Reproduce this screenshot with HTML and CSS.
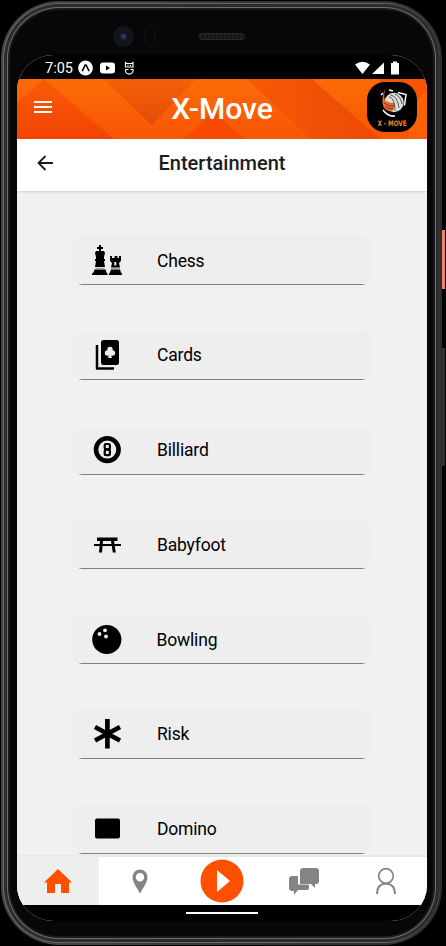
FILE: index.html
```html
<!DOCTYPE html>
<html lang="en">
<head>
<meta charset="utf-8">
<title>X-Move</title>
<link rel="stylesheet" href="styles.css">
</head>
<body>
<div class="phone">
  <i class="power"></i><i class="volume"></i>
  <div class="bezel">
    <div class="sensors"><i class="camera"></i><i class="sensor"></i><i class="speaker"></i></div>
    <div class="screen">
      <div class="status">
        <span class="time">7:05</span>
        <svg class="st-left" width="70" height="20" viewBox="0 0 70 20">
          <circle cx="7.5" cy="10" r="7.4" fill="#fff"/><path d="M4.3 13.2 7.2 7h.9l3 6.2" fill="none" stroke="#000" stroke-width="1.6"/>
          <rect x="22" y="4.6" width="15" height="11" rx="3" fill="#fff"/><path d="M28 7.6v5l4-2.500z"/>
          <path d="M47.500 9V4.500l1.500 1h4.500l1.500-1V9zM49.500 7.300h1M52 7.300h1M47.500 11.500h3M47.500 11.500v1.300a3.750 3.300 0 0 0 7.500 0v-1.300h-2.500" fill="none" stroke="#fff" stroke-width="1.200"/>
        </svg>
        <svg class="st-right" width="46" height="20" viewBox="0 0 46 20">
          <path d="M0 6.500q7.500-5.500 15 0L7.500 16zM17 16 29 4.500V16zM36 5h2V3.500h4V5h2v11.500h-8z" fill="#fff"/>
        </svg>
      </div>
      <header class="brand">
        <svg class="pattern" width="410" height="60" viewBox="0 0 410 60">
          <defs>
            <linearGradient id="base" x1="0" y1="0" x2="0" y2="1"><stop offset="0" stop-color="#f75c06"/><stop offset="1" stop-color="#f44302"/></linearGradient>
            <linearGradient id="lite" gradientUnits="userSpaceOnUse" x1="0" y1="0" x2="0" y2="60"><stop offset="0" stop-color="#fb6b08"/><stop offset="1" stop-color="#f95504"/></linearGradient>
            <linearGradient id="dark" x1="0" y1="0" x2="0" y2="1"><stop offset="0" stop-color="#f26007"/><stop offset="1" stop-color="#e64b08"/></linearGradient>
            <linearGradient id="shade" x1="0" y1="0" x2="1" y2="0"><stop offset="0" stop-color="#f55a05"/><stop offset="1" stop-color="#e94a06"/></linearGradient>
          </defs>
          <path d="M0 0h410v60H0z" fill="url(#base)"/>
          <path d="M0 0h27L0 24z" fill="url(#lite)"/>
          <path d="M27 0h60l62 60H97z" fill="url(#lite)"/>
          <path d="M87 0h92l-44 46z" fill="url(#dark)"/>
          <path d="M179 0h51l65 60H122l13-14z" fill="url(#lite)"/>
          <path d="M167 60 197 32 227 60z" fill="#f64a03"/>
          <path d="M230 0h65l68 60h-68z" fill="url(#shade)"/>
          <path d="M295 0h67l40 60h-39z" fill="url(#lite)"/>
          <path d="M362 0h48v60h-18z" fill="#f65403"/>
          <path d="M392 28 410 11v49h-18z" fill="#fb6105"/>
        </svg>
        <svg class="menu" width="18" height="12" viewBox="0 0 18 12"><path d="M0 1h18M0 6h18M0 11h18" stroke="#fff" stroke-width="2"/></svg>
        <h1>X-Move</h1>
        <svg class="logo" width="50" height="50" viewBox="0 0 50 50">
          <rect width="50" height="50" rx="18"/>
          <path d="m14 13 2-2M22 8l4 1M31 10.500l8 2-1.500 11M16 28q5 7 12 6" fill="none" stroke="#fff" stroke-width="1.500"/>
          <circle cx="27" cy="20.500" r="9.700" fill="#dedede"/>
          <path d="M18.500 6q-2 6-1 12 4 3 10 3 1 4-2 8-6 1-9-4-3-8 2-19z" fill="#f26a27"/>
          <path d="M22 14.500q6 2 6 14M23.500 13q7 1 8.500 13M28 12q6 3 7 10M17 21q5 4 10 3M18 24.500q4 3 8 2" fill="none" stroke="#333" stroke-width=".8"/>
          <text x="10.500" y="43.500" textLength="29" lengthAdjust="spacingAndGlyphs">X - MOVE</text>
        </svg>
      </header>
      <div class="titlebar">
        <svg class="back" width="16" height="16" viewBox="0 0 16 16"><path d="M16 8H1.500M8.500 1l-7 7 7 7" fill="none" stroke="#1c1c1e" stroke-width="1.800"/></svg>
        <h2>Entertainment</h2>
      </div>
      <main class="list">
        <div class="item"><svg viewBox="0 0 32 32"><path d="M8 0h2v2h2v2h-2v2h3l1 2-1 4v2h1v2h-1l1 6H4l1-6H4v-2h1v-2L4 8l1-2h3V4H6V2h2zM3.500 24.500h11l1 3 1 1v1.500H1v-1.500l1.500-1zM19 11h2v2h2.500v-2h3v2H28v-2h2v5l-2 2 1 4.500h-9l1-4.500-2-2zm4.300 6v3.500h2V17zM20 24.500h9l1 3 1 1v1.500H18v-1.500l1-1z"/><path d="M4.500 23.300h9M20 23.300h9" stroke="#777" stroke-width=".8"/></svg><span>Chess</span></div>
        <div class="item"><svg viewBox="0 0 32 32"><rect x="10" y="1" width="18" height="25" rx="2.500"/><path d="M6 6v23.500h17" fill="none" stroke="#000" stroke-width="2.500" stroke-linejoin="round"/><g fill="#eee"><circle cx="19" cy="10.500" r="2.700"/><circle cx="16.500" cy="14" r="2.700"/><circle cx="21.500" cy="14" r="2.700"/><path d="M18.200 12h1.600l1 7h-3.600z"/></g></svg><span>Cards</span></div>
        <div class="item"><svg viewBox="0 0 32 32"><circle cx="16.300" cy="15.600" r="11.300" fill="none" stroke="#000" stroke-width="4.600"/><rect x="13.700" y="10" width="5.200" height="5.200" rx="1.300" fill="none" stroke="#000" stroke-width="2.200"/><rect x="13.700" y="15.700" width="5.200" height="5.500" rx="1.300" fill="none" stroke="#000" stroke-width="2.200"/></svg><span>Billiard</span></div>
        <div class="item"><svg viewBox="0 0 32 32"><path d="M6 8.500h20.500V12H6zM3 15h27v2H3zM9 12h3l-1 11.500H8zM20 12h3l1.800 11.500h-3z"/></svg><span>Babyfoot</span></div>
        <div class="item"><svg viewBox="0 0 32 32"><circle cx="15.800" cy="15.500" r="14.600"/><g fill="#eee"><circle cx="8.500" cy="10" r="1.900"/><circle cx="14" cy="6.300" r="1.900"/><circle cx="15" cy="12.500" r="1.900"/></g></svg><span class="nudged">Bowling</span></div>
        <div class="item"><svg viewBox="0 0 32 32"><path d="M16.400 1v29.500M4 9l25 13.500M29 9 4 22.500" stroke="#000" stroke-width="4.700"/></svg><span>Risk</span></div>
        <div class="item"><svg viewBox="0 0 32 32"><rect x="4" y="5.500" width="25" height="20" rx="2"/></svg><span>Domino</span></div>
      </main>
      <nav class="tabs">
        <a class="active"><svg width="28" height="26" viewBox="0 0 28 26"><path d="M14 1 0 14.500h3V25h8v-9h6v9h8V14.500h3z" fill="#ff5000"/></svg></a>
        <a><svg width="16" height="25" viewBox="0 0 16 25"><path fill-rule="evenodd" d="M8 .5a7.500 7.500 0 0 0-7.500 7.700C.5 13 5 19 8 24.500c3-5.500 7.500-11.500 7.500-16.300A7.500 7.500 0 0 0 8 .5zM8 4a4.200 4.200 0 1 1 0 8.400A4.200 4.200 0 0 1 8 4z" fill="#848484"/></svg></a>
        <a><svg width="44" height="44" viewBox="0 0 44 44"><circle cx="22" cy="22" r="21.500" fill="#ff5000"/><path d="M17 11v22l13-11z" fill="#fff"/></svg></a>
        <a><svg width="30" height="27" viewBox="0 0 30 27"><path d="M3 8h6v8.500h11v3.500q0 2-2 2H9l-4 5v-4H3q-3 0-3-3v-9q0-3 3-3zM14 0h13q3 0 3 3v10q0 3-3 3h-1v4l-4-4H11V3q0-3 3-3z" fill="#848484"/></svg></a>
        <a><svg width="20" height="26" viewBox="0 0 20 26"><circle cx="10" cy="8" r="7.300" fill="none" stroke="#848484" stroke-width="1.700"/><path d="M1 26q0-10 9-10.500Q19 16 19 26" fill="none" stroke="#848484" stroke-width="2"/></svg></a>
      </nav>
      <div class="gesture"><i></i></div>
    </div>
  </div>
</div>
</body>
</html>
```
FILE: styles.css
```css
* { box-sizing: border-box; }
body { margin: 0; width: 446px; height: 946px; overflow: hidden; background: #000; font-family: Roboto, sans-serif; }
.phone { position: relative; width: 441px; height: 944px; margin: 1px 0 0 1px; padding: 2px; border-radius: 58px; background: linear-gradient(90deg, #414345, #2c2d2f); }
.power, .volume { position: absolute; left: 441px; width: 3px; }
.power { top: 229px; height: 59px; background: #f18466; }
.volume { top: 347px; height: 118px; background: #30312f; }
.bezel { height: 940px; border-radius: 56px; background: #07070a; padding: 52px 12px 0 14px;
  box-shadow: inset 1px 0 0 #6e6f73, inset -1px 0 0 #333436, inset 0 1px 0 #66676a, inset 0 -1px 0 #66676a, inset 0 0 0 4px #2b2c2e, inset 0 0 0 5px #6d6e70, inset 0 0 0 7px #1b1b1d; }
.sensors { display: flex; align-items: center; height: 32px; margin: -35px 0 3px; padding-left: 96px; }
.camera { width: 21px; height: 21px; border-radius: 50%; background: radial-gradient(#34395b 0 1px, #11131d 4px 6px, #141517 8px 10px); }
.sensor { width: 10px; height: 22px; margin-left: 11px; border-radius: 5px; border: 1px solid #121214; }
.speaker { width: 46px; height: 7px; margin-left: 44px; border-radius: 3px; border: 1px solid #29292a; background: repeating-linear-gradient(90deg, #202021 0 2px, #151516 2px 4px); }
.screen { width: 410px; height: 866px; border-radius: 36px; background: #f1f1f1; overflow: hidden; display: flex; flex-direction: column; }
.status { flex: 0 0 24px; background: #000; color: #fff; display: flex; align-items: center; padding: 2px 26px 0 28px; }
.time { font-size: 14.5px; line-height: 20px; width: 33px; margin-top: 1px; }
.st-right { margin-left: auto; }
.brand { flex: 0 0 60px; display: grid; grid-template-columns: 60px 1fr 60px; align-items: center; }
.pattern { grid-area: 1 / 1 / 2 / 4; }
.menu { grid-area: 1 / 1; margin: -4px 0 0 17px; }
.brand h1 { grid-area: 1 / 2; margin: -1px 0 0; text-align: center; font-size: 30px; line-height: 36px; font-weight: 500; color: #fff; }
.logo { grid-area: 1 / 3; margin: -4px 0 0; }
.logo text { font: bold 7.5px "DejaVu Sans", sans-serif; fill: #e98a25; }
.titlebar { flex: 0 0 52px; background: #fff; display: flex; align-items: center; padding: 0 20px; box-shadow: 0 1px 2px #0002; position: relative; }
.back { margin-top: -4px; }
.titlebar h2 { flex: 1; margin: -4px 16px 0 0; text-align: center; font-size: 20px; line-height: 24px; font-weight: 500; color: #1c1c1e; }
.list { flex: 1; min-height: 0; padding: 45px 56px 0; display: flex; flex-direction: column; gap: 45.8px; border-bottom: 2px solid #e9e9e9; }
.item { flex: 0 0 49px; display: flex; align-items: center; padding-left: 18px; border-radius: 9px;
  background: linear-gradient(#808080, #808080) 6px 100% / 286px 1px no-repeat, #eee; }
.item svg { width: 32px; height: 32px; margin-right: 34px; }
.item span { font-size: 17.5px; line-height: 24px; color: #000; letter-spacing: -0.18px; }
.item .nudged { margin-left: -0.5px; }
.tabs { flex: 0 0 48px; display: grid; grid-template-columns: repeat(5, 82px); background: #fff; }
.tabs a { display: flex; align-items: center; justify-content: center; }
.tabs .active { background: #eee; }
.gesture { flex: 0 0 16px; background: #000; display: flex; align-items: center; justify-content: center; }
.gesture i { width: 72px; height: 2px; background: #fff; }
```
